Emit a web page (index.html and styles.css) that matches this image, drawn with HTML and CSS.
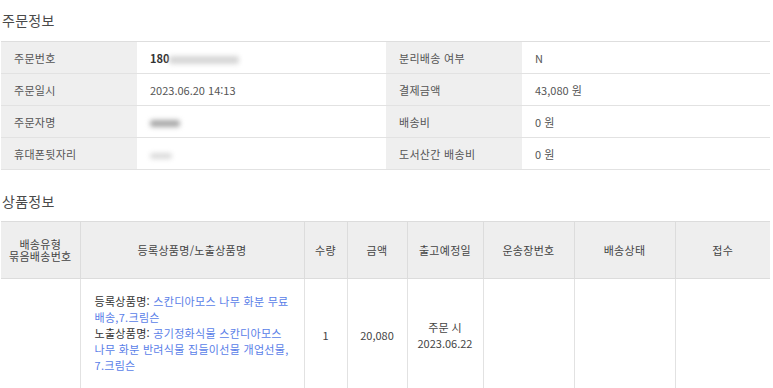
FILE: index.html
```html
<!DOCTYPE html>
<html lang="ko">
<head>
<meta charset="utf-8">
<title>주문정보</title>
<link rel="stylesheet" href="styles.css">
</head>
<body>
<div class="page">
  <h2 class="section-title">주문정보</h2>
  <table class="info">
    <colgroup>
      <col class="c-label"><col class="c-value"><col class="c-label2"><col class="c-value2">
    </colgroup>
    <tr>
      <th>주문번호</th>
      <td><span class="strong">180</span><span class="blur blur-long"></span></td>
      <th>분리배송 여부</th>
      <td>N</td>
    </tr>
    <tr>
      <th>주문일시</th>
      <td>2023.06.20 14:13</td>
      <th>결제금액</th>
      <td>43,080 원</td>
    </tr>
    <tr>
      <th>주문자명</th>
      <td><span class="blur blur-name"></span></td>
      <th>배송비</th>
      <td>0 원</td>
    </tr>
    <tr>
      <th>휴대폰뒷자리</th>
      <td><span class="blur blur-phone"></span></td>
      <th>도서산간 배송비</th>
      <td>0 원</td>
    </tr>
  </table>

  <h2 class="section-title second">상품정보</h2>
  <table class="goods">
    <colgroup>
      <col class="g1"><col class="g2"><col class="g3"><col class="g4">
      <col class="g5"><col class="g6"><col class="g7"><col>
    </colgroup>
    <thead>
      <tr>
        <th>배송유형<br>묶음배송번호</th>
        <th>등록상품명/노출상품명</th>
        <th>수량</th>
        <th>금액</th>
        <th>출고예정일</th>
        <th>운송장번호</th>
        <th>배송상태</th>
        <th>접수</th>
      </tr>
    </thead>
    <tbody>
      <tr>
        <td></td>
        <td class="name">
          <div class="name-text">등록상품명: <a href="#">스칸디아모스 나무 화분 무료배송,<wbr>7.크림슨</a><br>노출상품명: <a href="#">공기정화식물 스칸디아모스 나무 화분 반려식물 집들이선물 개업선물,<wbr>7.크림슨</a></div>
        </td>
        <td>1</td>
        <td>20,080</td>
        <td>주문 시<br>2023.06.22</td>
        <td></td>
        <td></td>
        <td></td>
      </tr>
    </tbody>
  </table>
</div>
</body>
</html>
```
FILE: styles.css
```css
* { box-sizing: border-box; }
html, body { margin: 0; padding: 0; background: #fff; }
body {
  font-family: "Noto Sans CJK KR", "Noto Sans", sans-serif;
  font-size: 11px;
  color: #333;
}
.page { width: 770px; padding-left: 1px; }
.section-title {
  margin: 0;
  padding: 10px 0 0 1px;
  height: 41px;
  font-size: 14px;
  font-weight: 400;
  color: #4a4a4a;
  line-height: 20px;
  letter-spacing: 0.3px;
}
.section-title.second { padding-top: 21px; height: 51px; }
table { border-collapse: collapse; width: 769px; table-layout: fixed; }
.info { border-top: 1px solid #dedede; }
.info .c-label { width: 136px; }
.info .c-value { width: 249px; }
.info .c-label2 { width: 136px; }
.info th, .info td {
  height: 32px;
  padding: 0 0 0 13px;
  border-bottom: 1px solid #e2e2e2;
  text-align: left;
  font-weight: 400;
  vertical-align: middle;
}
.info th { background: #efefef; color: #555; letter-spacing: 0.3px; }
.info td { color: #555; }
.strong { font-weight: 700; color: #333; }
.blur {
  display: inline-block;
  vertical-align: middle;
  height: 8px;
  background: #bdbdbd;
  filter: blur(2.5px);
  border-radius: 3px;
}
.blur-long { width: 70px; background: #d6d6d6; }
.blur-name { width: 30px; background: #a8a8a8; height: 7px; }
.blur-phone { width: 22px; background: #dadada; height: 6px; }

.goods .g1 { width: 79px; }
.goods .g2 { width: 224px; }
.goods .g3 { width: 43px; }
.goods .g4 { width: 60px; }
.goods .g5 { width: 76px; }
.goods .g6 { width: 91px; }
.goods .g7 { width: 101px; }
.goods { border-top: 1px solid #dcdcdc; }
.goods th, .goods td {
  border: 1px solid #e2e2e2;
  text-align: center;
  vertical-align: middle;
  font-weight: 400;
}
.goods th {
  background: #eeeeee;
  color: #444;
  height: 57px;
  line-height: 12px;
  border-color: #dcdcdc;
  letter-spacing: 0.3px;
}
.goods td { height: 112px; color: #444; line-height: 16px; }
.goods td.name { text-align: left; padding: 0 11px 0 14px; vertical-align: top; letter-spacing: 0.3px; color: #333; }
.name-text { padding-top: 14px; }
.goods a { color: #5a7ee8; text-decoration: none; }
.goods tr > :first-child { border-left: 0; }
.goods tr > :last-child { border-right: 0; }
```
